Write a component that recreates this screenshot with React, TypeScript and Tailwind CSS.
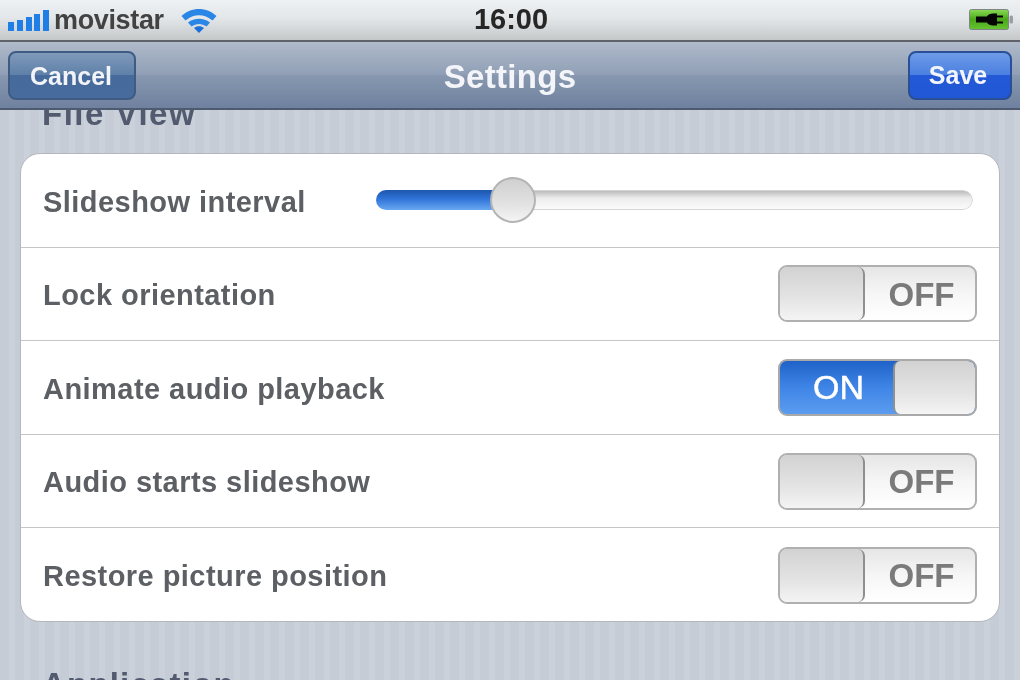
import React from "react";

const font = { fontFamily: '"Liberation Sans", Arial, sans-serif' };

function Toggle({ on }: { on: boolean }) {
  if (on) {
    return (
      <div className="flex h-[57px] w-[199px] overflow-hidden rounded-[9px] border-2 border-[#a9a9a9] bg-[linear-gradient(180deg,#1f62c8_0%,#3f85e6_50%,#5b9cf0_100%)]">
        <div className="flex w-[113px] items-center justify-center pl-[4px] text-[34px] font-normal text-white [-webkit-text-stroke:0.5px_white]">
          ON
        </div>
        <div className="flex-1 rounded-[7px] border-l-2 border-[#8f8f8f] bg-[linear-gradient(180deg,#d2d2d2_0%,#e4e4e4_60%,#f4f4f4_100%)]" />
      </div>
    );
  }
  return (
    <div className="flex h-[57px] w-[199px] overflow-hidden rounded-[9px] border-2 border-[#b0b0b0] bg-[linear-gradient(180deg,#e6e6e6_0%,#f6f6f6_50%,#ffffff_100%)]">
      <div className="w-[85px] rounded-[7px] border-r-2 border-[#8f8f8f] bg-[linear-gradient(180deg,#d2d2d2_0%,#e4e4e4_60%,#f4f4f4_100%)]" />
      <div className="flex flex-1 items-center justify-center pl-[3px] pt-[1px] text-[33px] font-bold text-[#7a7a7a]">
        OFF
      </div>
    </div>
  );
}

function Row({ label, children, last }: { label: string; children: React.ReactNode; last?: boolean }) {
  return (
    <div className={"flex h-[93.6px] items-center justify-between pl-[22px] pr-[22px] " + (last ? "" : "border-b-[1.5px] border-[#c6c6c6]")}>
      <span className="pt-[4px] text-[29px] font-bold tracking-[0.45px] text-[#5c5f63]">{label}</span>
      {children}
    </div>
  );
}

function Slider() {
  return (
    <div className="relative mr-[4px] flex h-[46px] w-[597px] items-center">
      <div className="flex h-[20px] w-full overflow-hidden rounded-full">
        <div className="w-[137px] bg-[linear-gradient(180deg,#1d56ad_0%,#2f74d8_45%,#6aa8f2_100%)]" />
        <div className="flex-1 rounded-r-full border border-[#d4d4d4] bg-[linear-gradient(180deg,#bcbcbc_0%,#ececec_40%,#fbfbfb_100%)]" />
      </div>
      <div className="absolute left-[114px] top-0 h-[46px] w-[46px] rounded-full border-2 border-[#b4b4b4] bg-[linear-gradient(180deg,#d0d0d0_0%,#e2e2e2_60%,#f4f4f4_100%)]" />
    </div>
  );
}

function Signal() {
  const bars = [9, 11, 14, 17, 21];
  return (
    <div className="flex items-end gap-[2.75px]">
      {bars.map((h, i) => (
        <div key={i} className="w-[6px] bg-[#1f7fe6]" style={{ height: h }} />
      ))}
    </div>
  );
}

function Wifi() {
  return (
    <svg width="36" height="25" viewBox="0 0 36 25" fill="none">
      <path d="M0.5 8 C10 -1.5 26 -1.5 35.5 8 L31.5 12.5 C23 5.5 13 5.5 4.5 12.5 Z" fill="#2a86e6" />
      <path d="M7 14.5 C13.5 9.5 22.5 9.5 29 14.5 L25.5 18.5 C21 15 15 15 10.5 18.5 Z" fill="#2a86e6" />
      <path d="M13 20 C16 17.5 20 17.5 23 20 L18 25 Z" fill="#1b6fd8" />
    </svg>
  );
}

function Battery() {
  return (
    <svg width="45" height="22" viewBox="0 0 45 22">
      <defs>
        <linearGradient id="batteryFill" x1="0" y1="0" x2="0" y2="1">
          <stop offset="0" stopColor="#8ada55" />
          <stop offset="0.5" stopColor="#4aa81a" />
          <stop offset="1" stopColor="#66c432" />
        </linearGradient>
      </defs>
      <rect x="0.5" y="0.5" width="39" height="20" rx="2" fill="url(#batteryFill)" stroke="#7f8484" />
      <rect x="40.5" y="6.5" width="3.5" height="8" rx="1.5" fill="#9a9ea0" />
      <path d="M7 7.5 H18 C19 5 22 4.5 28 4.5 V6.5 H34 V8.5 H28 V12.5 H34 V14.5 H28 V16.5 C22 16.5 19 16 18 13.5 H7 Z" fill="#050505" />
    </svg>
  );
}

export default function App() {
  return (
    <div style={font} className="flex h-[680px] w-[1020px] flex-col overflow-hidden bg-[#c6cdd7] blur-[0.7px]">
      <div className="flex h-[42px] shrink-0 items-center justify-between border-b-2 border-[#5f6268] bg-[linear-gradient(180deg,#eef1f3_0%,#e3e7e9_45%,#c4c8c9_100%)] pl-[8px] pr-[6px]">
        <div className="flex w-[340px] items-center">
          <Signal />
          <span className="ml-[5px] text-[27px] font-bold tracking-[-0.35px] text-[#424242]">movistar</span>
          <div className="ml-[17px]">
            <Wifi />
          </div>
        </div>
        <span className="text-[29px] font-bold text-[#262626]">16:00</span>
        <div className="flex w-[340px] justify-end">
          <Battery />
        </div>
      </div>

      <div className="relative z-10 grid h-[68px] shrink-0 grid-cols-[1fr_auto_1fr] items-center border-b-2 border-[#4d5a70] bg-[linear-gradient(180deg,#afbaca_0%,#909fb6_50%,#8898b0_50%,#6f819f_100%)] pl-[8px] pr-[8px]">
        <button className="h-[49px] w-[128px] justify-self-start rounded-[8px] border-2 border-[#3f5b84] bg-[linear-gradient(180deg,#7f9aba_0%,#5e7fa8_50%,#466a9b_50%,#476b9c_100%)] pr-[2px] pt-[3px] text-center text-[25px] font-bold text-[#f2f4f7]">
          Cancel
        </button>
        <span className="pt-[3px] text-[33px] font-bold tracking-[0.3px] text-[#f3f5f8]">Settings</span>
        <button className="h-[49px] w-[104px] justify-self-end rounded-[8px] border-2 border-[#2b4f97] bg-[linear-gradient(180deg,#6d9be8_0%,#4a7fe0_50%,#2359d6_50%,#2057d4_100%)] pr-[4px] pt-[2px] text-center text-[25px] font-bold text-[#f2f5fb]">
          Save
        </button>
      </div>

      <div className="flex-1 overflow-hidden bg-[repeating-linear-gradient(90deg,#c5ccd6_0px,#c5ccd6_9px,#cad1da_9px,#cad1da_15px)]">
        <div className="-mt-[15px] pl-[42px] text-[33px] font-bold leading-[38px] tracking-[1.5px] text-[#525a70]">File View</div>
        <div className="mx-[20px] mt-[20px] h-[469px] overflow-hidden rounded-[20px] border-[1.5px] border-[#b4b7bb] bg-white">
          <Row label="Slideshow interval">
            <Slider />
          </Row>
          <Row label="Lock orientation">
            <Toggle on={false} />
          </Row>
          <Row label="Animate audio playback">
            <Toggle on={true} />
          </Row>
          <Row label="Audio starts slideshow">
            <Toggle on={false} />
          </Row>
          <Row label="Restore picture position" last>
            <Toggle on={false} />
          </Row>
        </div>
        <div className="mt-[44px] pl-[42px] text-[33px] font-bold leading-[38px] tracking-[1.2px] text-[#525a70]">Application</div>
      </div>
    </div>
  );
}
